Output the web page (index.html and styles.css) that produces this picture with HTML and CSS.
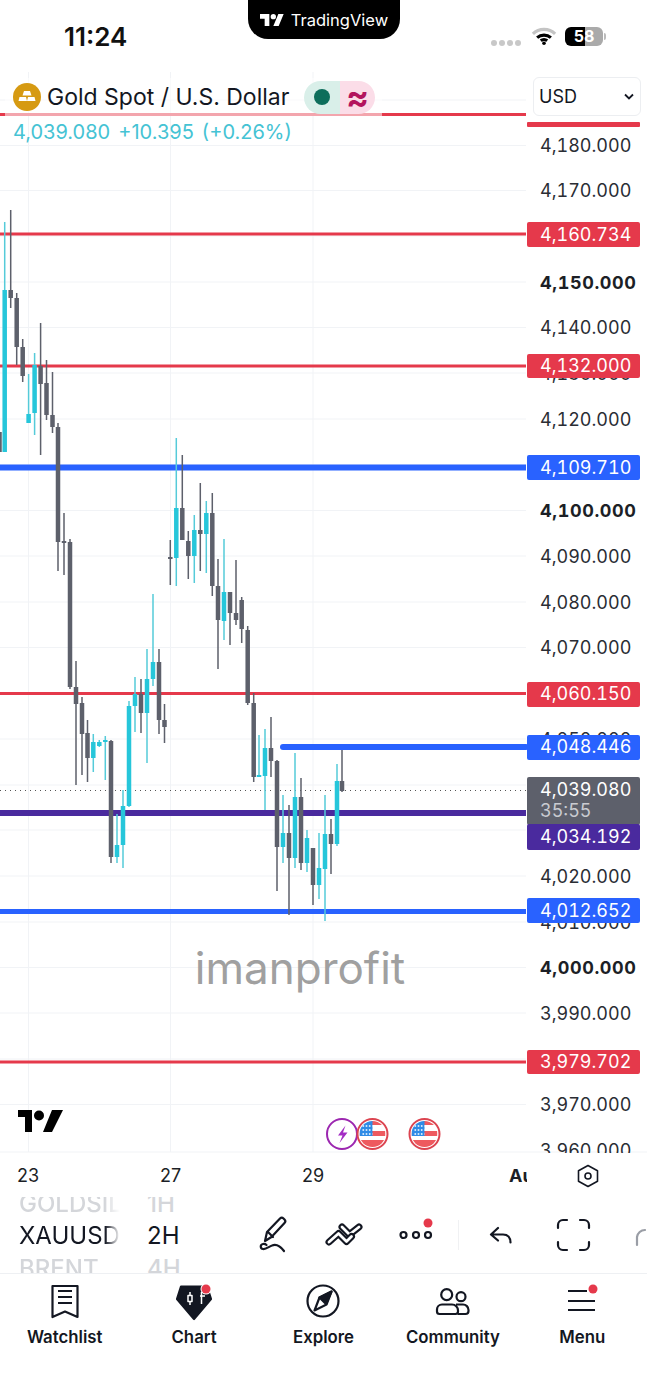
FILE: index.html
```html
<!DOCTYPE html>
<html lang="en">
<head>
<meta charset="UTF-8" />
<title>Gold Spot / U.S. Dollar</title>
<link rel="stylesheet" href="styles.css">
</head>
<body>
<div class="page">

<header class="statusbar">
  <div class="clock">11:24</div>
  <div class="island">
    <svg class="tv-mark" viewBox="0 0 36 18"><path d="M14 18H7V7H0V0h14v18zM28 18h-8L27.500 0h8L28 18z"/><circle cx="20" cy="4" r="4"/></svg>
    <span>TradingView</span>
  </div>
  <div class="status-right">
    <div class="signal"><i></i><i></i><i></i><i></i></div>
    <svg class="wifi" viewBox="1 0 24 17"><path d="M2.500 6.500a15 15 0 0 1 21 0" class="wifi-far"/><path d="M6.500 10a10 10 0 0 1 13 0M10 13a4.500 4.500 0 0 1 6 0"/><circle cx="13" cy="15.300" r="1.700"/></svg>
    <div class="battery"><span>58</span></div>
  </div>
</header>

<section class="chart">
  <svg class="chart-canvas" width="647" height="1125" viewBox="0 72 647 1125">
    <defs>
      <clipPath id="flagClip"><circle cx="0" cy="0" r="13"/></clipPath>
      <g id="usFlag">
        <circle r="15" class="flag-ring"/>
        <g clip-path="url(#flagClip)">
          <rect x="-13" y="-13" width="26" height="26" fill="#fff"/>
          <rect x="-13" y="-3" width="26" height="5" fill="#ee5a5f"/>
          <rect x="-13" y="6" width="26" height="7" fill="#ee5a5f"/>
          <rect x="-1" y="-13" width="14" height="4" fill="#ee5a5f"/>
          <rect x="-13" y="-13" width="13" height="15" fill="#2f8be6"/>
          <path d="M-10-8h10M-10-4h10M-10 0h10" stroke="#fff" stroke-width="1.600" stroke-dasharray="1.600 1.600"/>
        </g>
      </g>
    </defs>

    <path class="grid" d="M0 100H526M0 145.500H526M0 190.500H526M0 236H526M0 282H526M0 327.500H526M0 373H526M0 419H526M0 465H526M0 510.500H526M0 556H526M0 602H526M0 647.500H526M0 693H526M0 739H526M0 785H526M0 830H526M0 876H526M0 922H526M0 967.500H526M0 1013H526M0 1059H526M0 1104.500H526M0 1152H647M28.500 72V1152M170.500 72V1152M313 72V1152"/>

    <g class="ticks">
      <text x="540" y="151.500">4,180.000</text>
      <text x="540" y="197">4,170.000</text>
      <text x="540" y="288.500" class="tick-bold">4,150.000</text>
      <text x="540" y="334">4,140.000</text>
      <text x="540" y="379.500">4,130.000</text>
      <text x="540" y="425.500">4,120.000</text>
      <text x="540" y="517" class="tick-bold">4,100.000</text>
      <text x="540" y="562.500">4,090.000</text>
      <text x="540" y="608.500">4,080.000</text>
      <text x="540" y="654">4,070.000</text>
      <text x="540" y="745.500">4,050.000</text>
      <text x="540" y="882.500">4,020.000</text>
      <text x="540" y="928.500">4,010.000</text>
      <text x="540" y="974" class="tick-bold">4,000.000</text>
      <text x="540" y="1019.500">3,990.000</text>
      <text x="540" y="1111">3,970.000</text>
      <text x="540" y="1156.500">3,960.000</text>
    </g>

    <!-- horizontal levels, drawn under the candles -->
    <path class="level red" d="M0 114.500H526M0 234H526M0 366H526M0 693.500H526M0 1062H526"/>
    <path class="level blue" d="M0 467.500H526"/>
    <path class="level blue thin" d="M0 911.500H526"/>
    <path class="level blue round" d="M283 747H526"/>
    <path class="level purple" d="M0 813H526"/>
    <path class="last-price" d="M0 790.500H526"/>

    <!-- candles -->
    <path class="wick up" d="M4.700 222V452M28.600 374V423M34.600 353V435M93.300 734V772M99.300 740V747M105.300 736V780M117 814V863M123 790V868M129 701V807M135 677V732M147 649V763M153 594V686M176.300 438V586M194.300 515V583M206.300 501V573M224 539V640M259 735V776M265 729V810M283 795V863M295 753V868M307 830V872M319 833V899M325 795V921M337 764V846"/>
    <path class="wick down" d="M10.700 210V308M16.700 293V365M22.700 339V382M40.600 323V455M46.500 360V420M52.500 372V433M58 423V571M64 513V575M70 539V689M76 661V785M82 697V775M87.500 720V782M111 740V863M141 679V733M159 649V734M164.500 704V743M170.300 540V585M182.300 455V540M188.300 531V579M200.300 483V571M212.300 493V596M218 559V669M230 592V645M236 560V625M241.700 597V643M247.700 626V705M253.700 693V782M271 717V777M277 760V891M289 805V915M301 778V870M313 848V905M331 819V874M342 750V792"/>
    <path class="body up" d="M4.700 290V452M28.600 414V423M34.600 365V413M93.300 742V758M99.300 742V746M105.300 740V742M117 845V857M123 806V845M129 706V806M135 694V706M147 679V713M153 662V679M176.300 508V558M194.300 530V556M206.300 513V534M224 592V621M259 775V777M265 748V776M283 833V847M295 797V858M307 838V863M319 868V885M325 834V869M337 781V844"/>
    <path class="body down" d="M-0.500 432V452M10.700 290V298M16.700 298V347M22.700 347V376M40.600 366V384M46.500 383V415M52.500 415V427M58 427V542M64 541V543M70 542V687M76 687V704M82 703V734M87.500 733V758M111 741V857M141 694V713M159 662V720M164.500 720V727M170.300 557V559M182.300 508V540M188.300 541V556M200.300 530V534M212.300 513V586M218 586V620M230 592V613M236 613V620M241.700 600V629M247.700 630V703M253.700 703V777M271 748V761M277 761V847M289 833V858M301 797V863M313 848V885M331 834V844M342 781V791"/>

    <text x="300" y="984" text-anchor="middle" class="watermark">imanprofit</text>

    <!-- price tags -->
    <rect x="527" y="122" width="113" height="5" rx="1" class="tag-red"/>
    <rect x="527" y="222" width="113" height="25" rx="2" class="tag-red"/>
    <rect x="527" y="354" width="113" height="24" rx="2" class="tag-red"/>
    <rect x="527" y="455" width="113" height="25" rx="2" class="tag-blue"/>
    <rect x="527" y="682" width="113" height="25" rx="2" class="tag-red"/>
    <rect x="527" y="735" width="113" height="25" rx="2" class="tag-blue"/>
    <rect x="527" y="777" width="113" height="48" rx="2" fill="#5d606b"/>
    <rect x="527" y="824" width="113" height="26" rx="2" fill="#4a2a9e"/>
    <rect x="527" y="898" width="113" height="25" rx="2" class="tag-blue"/>
    <rect x="527" y="1050" width="113" height="24" rx="2" class="tag-red"/>
    <g class="tag-text">
      <text x="540" y="240.500">4,160.734</text>
      <text x="540" y="372">4,132.000</text>
      <text x="540" y="473.500">4,109.710</text>
      <text x="540" y="700">4,060.150</text>
      <text x="540" y="753">4,048.446</text>
      <text x="540" y="796">4,039.080</text>
      <text x="540" y="817" class="tag-dim">35:55</text>
      <text x="540" y="842.500">4,034.192</text>
      <text x="540" y="917">4,012.652</text>
      <text x="540" y="1068">3,979.702</text>
    </g>

    <!-- logo and event marks -->
    <path d="M32 1132h-7v-15h-7v-7h14v22zM52 1132h-9l9-22h11l-11 22z"/>
    <circle cx="39" cy="1115.500" r="5"/>
    <circle cx="342" cy="1134" r="15" class="event-ring"/>
    <path d="M345.500 1125.500l-7.500 10h4.500l-3 7.500 8-10.500h-4.500z" fill="#a32cc4"/>
    <use href="#usFlag" x="372.500" y="1134"/>
    <use href="#usFlag" x="424.500" y="1134"/>

    <!-- time axis -->
    <rect x="0" y="1153" width="647" height="44" fill="#fff"/>
    <g class="times">
      <text x="28" y="1182" text-anchor="middle">23</text>
      <text x="170.500" y="1182" text-anchor="middle">27</text>
      <text x="313" y="1182" text-anchor="middle">29</text>
      <text x="509" y="1182" class="time-bold">Au</text>
    </g>
    <rect x="527" y="1160" width="30" height="30" fill="#fff"/>
    <path class="hex" d="M588 1165.500l9.500 5.300v10.400l-9.500 5.300-9.500-5.300v-10.400z"/>
    <circle cx="588" cy="1176" r="3" class="hex"/>
  </svg>

  <div class="legend">
    <div class="legend-title">
      <svg class="gold-icon" viewBox="0 0 28 28"><circle cx="14" cy="14" r="14" fill="#d69a12"/><path d="M11 8h6l1.500 4.500h-9zM6.500 14h6.500l1 4H5.500zM15 14h6.500l1 4H14z" fill="#fff"/></svg>
      <span class="symbol-name">Gold Spot / U.S. Dollar</span>
      <div class="state-pill">
        <div class="state-open"><i></i></div>
        <div class="state-delay">≈</div>
      </div>
    </div>
    <div class="legend-price">
      <span>4,039.080</span>
      <span>+10.395</span>
      <span>(+0.26%)</span>
    </div>
  </div>

  <div class="currency">
    <span>USD</span>
    <svg width="10" height="7" viewBox="0 0 10 7"><path d="M1 1.500l4 4 4-4"/></svg>
  </div>
</section>

<section class="toolbar">
  <div class="picker picker-symbol">
    <div class="faded">GOLDSILVER</div>
    <div>XAUUSD</div>
    <div class="faded">BRENT</div>
  </div>
  <div class="picker picker-interval">
    <div class="faded">1H</div>
    <div>2H</div>
    <div class="faded">4H</div>
  </div>
  <div class="tools">
    <svg class="tool" viewBox="0 0 40 40"><path d="M13 26l2-9L28 3.500a2.500 2.500 0 0 1 3.500 0l1 1a2.500 2.500 0 0 1 0 3.500L19.500 22zM15.500 16.500l5.500 5.500"/><path d="M32 36c-3-4-7-7.500-12-5.500-3 1-6 4-9 3.500-3-.5-3-4.500 0-5 2-.3 3 .5 3.500 1"/></svg>
    <svg class="tool" viewBox="0 0 40 40"><path class="zig-outer" d="M18 12l7.500 7.500L35 12"/><path class="zig-inner" d="M18 12l7.500 7.500L35 12"/><path class="zig-outer" d="M5 27l9.500-8.500 8 8 5-5"/><path class="zig-inner" d="M5 27l9.500-8.500 8 8 5-5"/></svg>
    <svg class="tool" viewBox="0 0 40 40"><circle cx="7.500" cy="20" r="3"/><circle cx="20" cy="20" r="3"/><circle cx="32" cy="20" r="3"/><circle cx="32" cy="8" r="4.500" class="dot-red"/></svg>
    <div class="tool-divider"></div>
    <svg class="tool" viewBox="0 0 40 40"><path d="M17 13l-7 6.500 7 6M10.500 19.500H22c5 0 7.500 3 7.500 8"/></svg>
    <svg class="tool" viewBox="0 0 40 40"><path d="M5 13v-3a5 5 0 0 1 5-5h4M27 5h4a5 5 0 0 1 5 5v3M36 27v3a5 5 0 0 1-5 5h-4M14 35h-4a5 5 0 0 1-5-5v-3"/></svg>
    <svg class="tool tool-off" viewBox="0 0 40 40"><path d="M11 30v-8a8 8 0 0 1 8-7"/></svg>
  </div>
</section>

<nav class="tabs">
  <div class="tab">
    <svg viewBox="0 0 40 40"><path d="M7.500 4h25v31L20 29.500 7.500 35zM13 9h14M13 15h14M13 21h14"/></svg>
    <span>Watchlist</span>
  </div>
  <div class="tab">
    <svg viewBox="0 0 40 40"><path class="solid" d="M7 4.500h26l4 12.500-17 20L3 17z"/><path class="cutout" d="M16 10v13M27.500 10v12M26 14h5"/><rect x="14" y="13.500" width="4" height="6" class="cutout-box"/><circle cx="32" cy="7" r="5.500" class="dot-ring"/><circle cx="32" cy="7" r="4.500" class="dot-red"/></svg>
    <span>Chart</span>
  </div>
  <div class="tab">
    <svg viewBox="0 0 40 40"><circle cx="20" cy="19" r="15.500"/><path d="M28.500 9.500l-12 6-5 13 12-6z"/><path class="solid" d="M28.500 9.500l-12 6 6.500 6.500z"/></svg>
    <span>Explore</span>
  </div>
  <div class="tab">
    <svg viewBox="0 0 40 40"><circle cx="13.700" cy="12.700" r="5.500"/><circle cx="28" cy="14.700" r="4.500"/><path d="M9 22.500h10a6 6 0 0 1 6 6v1a2.500 2.500 0 0 1-2.500 2.500h-16A2.500 2.500 0 0 1 4 29.500v-2a5 5 0 0 1 5-5zM23 22.500h7a5.500 5.500 0 0 1 5.500 5.500v1a3 3 0 0 1-3 3H25"/></svg>
    <span>Community</span>
  </div>
  <div class="tab">
    <svg viewBox="0 0 40 40"><path d="M6 9h19M6 19h27M6 28h27"/><circle cx="31" cy="7" r="4.500" class="dot-red"/></svg>
    <span>Menu</span>
  </div>
</nav>

</div>
</body>
</html>
```

FILE: styles.css
```css
:root{--red:#e5394b;--blue:#2962ff;--purple:#4a2a9e;--up:#26c6da;--down:#5d606b;--grid:#f1f3f6;--txt:#131722;}
*,*:before,*:after{box-sizing:border-box;}
body{margin:0;background:#fff;color:var(--txt);font-family:Inter,"Liberation Sans",sans-serif;}
.page{width:647px;height:1400px;overflow:hidden;display:flex;flex-direction:column;}

/* status bar */
.statusbar{height:72px;flex:none;display:grid;grid-template-columns:248px 152px 1fr;}
.clock{font-size:26px;font-weight:600;padding:23px 0 0 64px;line-height:28px;color:#111;}
.island{height:39px;background:#000;border-radius:0 0 20px 20px;color:#fff;display:flex;align-items:center;justify-content:center;gap:7px;font-size:16.500px;}
.tv-mark{width:24px;height:12px;fill:#fff;}
.status-right{display:flex;align-items:flex-start;padding:27px 0 0 91px;}
.signal{display:flex;gap:2px;margin-top:13px;}
.signal i{width:6px;height:6px;border-radius:50%;background:#c8c8c8;}
.wifi{width:26px;height:18px;margin-left:10px;fill:#000;stroke:#000;stroke-width:3;}
.wifi path{fill:none;}
.wifi .wifi-far{stroke:#c4c4c4;}
.wifi circle{stroke:none;}
.battery{width:38px;height:19px;margin-left:8px;border-radius:6px;background:linear-gradient(90deg,#000 52%,#aaa 52%);color:#fff;font-size:16px;font-weight:700;line-height:19px;text-align:center;position:relative;}
.battery:after{content:"";position:absolute;left:39px;top:6px;width:2px;height:7px;border-radius:0 2px 2px 0;background:#bbb;}

/* chart */
.chart{position:relative;height:1125px;flex:none;border-bottom:1px solid #eef0f3;}
.chart-canvas{display:block;}
.grid{stroke:var(--grid);stroke-width:1;fill:none;}
.ticks text{font-size:18px;fill:#2a2d34;font-variant-numeric:tabular-nums;}
.ticks .tick-bold{font-weight:700;fill:#1c1f26;letter-spacing:.6px;}
.level{fill:none;stroke-width:3;}
.level.red{stroke:var(--red);}
.level.blue{stroke:var(--blue);stroke-width:6;}
.level.thin{stroke-width:5;}
.level.round{stroke-linecap:round;}
.level.purple{stroke:var(--purple);stroke-width:6;}
.last-price{stroke:#555;stroke-width:1;stroke-dasharray:1 4;fill:none;}
.wick{fill:none;stroke-width:1.500;}
.wick.up{stroke:#55cbd9;}
.wick.down{stroke:var(--down);}
.body{fill:none;stroke-width:4.500;}
.body.up{stroke:var(--up);}
.body.down{stroke:var(--down);}
.watermark{font-size:44px;fill:#a0a0a0;}
.tag-red{fill:var(--red);}
.tag-blue{fill:var(--blue);}
.tag-text text{font-size:18px;fill:#fff;font-variant-numeric:tabular-nums;}
.tag-text .tag-dim{fill:#c9cbd1;}
.event-ring{fill:#fff;stroke:#9c27b0;stroke-width:2;}
.flag-ring{fill:#fff;stroke:#dc4450;stroke-width:2;}
.times text{font-size:18px;fill:#1c1f26;}
.times .time-bold{font-weight:700;}
.hex{fill:none;stroke:#131722;stroke-width:1.600;stroke-linejoin:round;}

.legend{position:absolute;left:0;top:6px;}
.legend-title{height:38px;width:377px;margin-left:5px;padding-left:8px;display:flex;align-items:center;background:rgba(255,255,255,.55);}
.gold-icon{width:28px;height:28px;flex:none;}
.symbol-name{font-size:23px;margin-left:6px;white-space:nowrap;width:257px;}
.state-pill{display:flex;height:33px;border-radius:17px;overflow:hidden;flex:none;}
.state-open{width:36px;background:#d9efe9;display:flex;align-items:center;justify-content:center;}
.state-open i{width:16px;height:16px;border-radius:50%;background:#0d6e5b;}
.state-delay{width:35px;background:#fbdde8;color:#b3155e;font-size:34px;font-weight:700;line-height:31px;text-align:center;}
.legend-price{margin:2px 0 0 13px;color:#45c3d4;font-size:20px;display:flex;gap:8px;line-height:28px;}

.currency{position:absolute;left:533px;top:5px;width:108px;height:39px;background:#fff;border:1px solid #eceef1;border-radius:6px;padding:0 6px 0 5px;display:flex;align-items:center;justify-content:space-between;font-size:18px;}
.currency svg{fill:none;stroke:#131722;stroke-width:1.800;}

/* toolbar */
.toolbar{height:77px;flex:none;display:flex;align-items:center;overflow:hidden;border-bottom:1px solid #eef0f3;}
.picker{flex:none;margin-top:3px;}
.picker div{height:32.500px;line-height:32.500px;font-size:24px;white-space:nowrap;}
.picker .faded{color:#d4d6da;font-weight:500;}
.picker-symbol{width:101px;margin-left:19px;overflow:hidden;-webkit-mask-image:linear-gradient(90deg,#000 85%,transparent 100%);mask-image:linear-gradient(90deg,#000 85%,transparent 100%);}
.picker-interval{margin-left:27px;width:50px;}
.tools{display:flex;flex:none;align-items:center;margin-left:55px;gap:32px;}
.tool{width:40px;height:40px;flex:none;fill:none;stroke:#131722;stroke-width:2.200;stroke-linecap:round;stroke-linejoin:round;}
.tool-off{stroke:#9a9ea6;margin-left:1px;}
.tool-divider{width:1px;height:30px;background:#f0f1f3;margin:0 -10px 0 -10px;}
.zig-outer{stroke-width:7;}
.zig-inner{stroke:#fff;stroke-width:2.800;}
.dot-red{fill:var(--red);stroke:none;}

/* bottom tabs */
.tabs{display:grid;grid-template-columns:repeat(5,1fr);padding-top:8px;}
.tab{display:flex;flex-direction:column;align-items:center;font-size:16.800px;font-weight:600;gap:5px;}
.tab svg{width:40px;height:40px;fill:none;stroke:#131722;stroke-width:2.200;stroke-linejoin:round;}
.tab .solid{fill:#131722;stroke:#131722;}
.tab .cutout{stroke:#fff;stroke-width:1.500;}
.tab .cutout-box{fill:#131722;stroke:#fff;stroke-width:1.500;}
.tab .dot-ring{fill:#fff;stroke:none;}
.tab .dot-red{stroke:none;fill:var(--red);}
```
